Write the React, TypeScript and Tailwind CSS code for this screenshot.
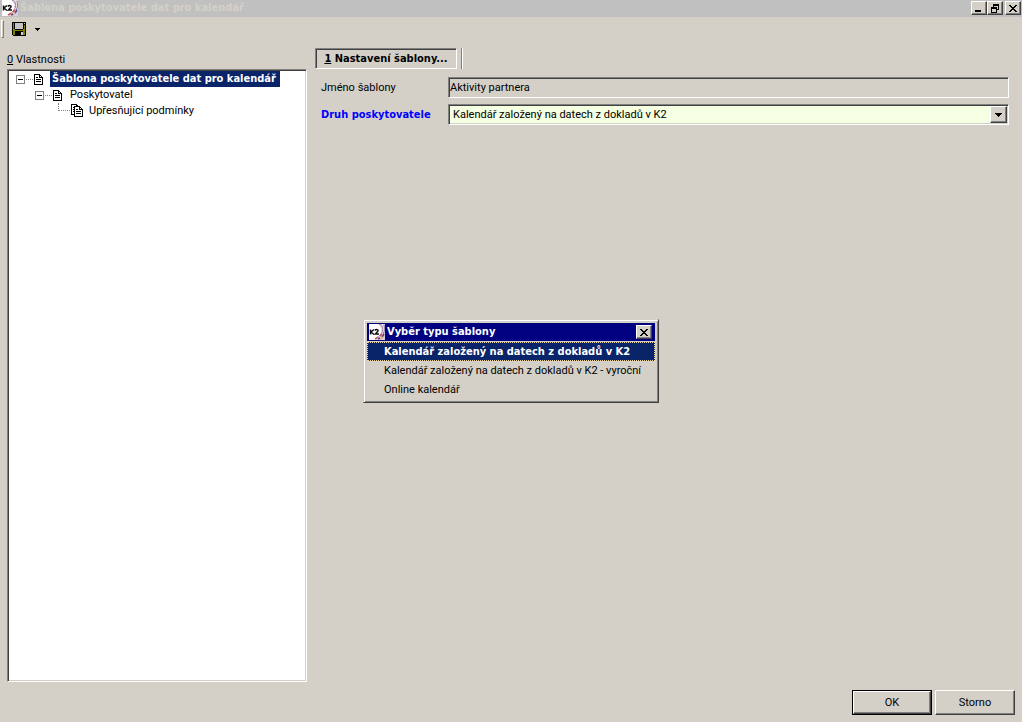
import { useState } from "react";

const TEMPLATE_TYPES = [
  "Kalendář založený na datech z dokladů v K2",
  "Kalendář založený na datech z dokladů v K2 - vyroční",
  "Online kalendář",
];

const boldFont = "font-['DejaVu_Sans_Condensed','DejaVu_Sans',sans-serif] font-bold";
const raised =
  "border border-t-white border-l-white border-r-[#404040] border-b-[#404040] bg-[#d4d0c8] shadow-[inset_-1px_-1px_0_#808080]";
const sunken =
  "border border-t-[#808080] border-l-[#808080] border-r-white border-b-white shadow-[inset_1px_1px_0_#404040,inset_-1px_-1px_0_#d4d0c8]";

const Logo = () => (
  <svg width="16" height="16" viewBox="0 0 16 16" className="shrink-0" aria-hidden="true">
    <rect width="16" height="16" fill="#fff" />
    <path d="M9 0h7v16H5l5-3 2-4V4z" fill="#d9cfdc" />
    <path d="M8 0c5 1 7 5 4 10-1 2-3 3-6 5" fill="none" stroke="#fff" strokeWidth="1" />
    <path d="M10 0c4 2 5 6 2 10-1 2-3 3-6 5" fill="none" stroke="#9a6f9c" strokeWidth="1" />
    <path d="M13 0c3 4 2 8-1 11" fill="none" stroke="#f4e3d0" strokeWidth="1" />
    <path d="M15 1c1 3 1 6-1 9" fill="none" stroke="#8d7aa8" strokeWidth="1" />
    <path d="M6 15l3-2M11 12l2-2" stroke="#dc4b3c" strokeWidth="1.500" />
    <path d="M9 15l2-1M13 13l2-3" stroke="#55408f" strokeWidth="1.500" />
    <path d="M11 15l3-2" stroke="#e9a04a" strokeWidth="1" />
    <path d="M1.500 5.500v5M5 5.500L2 8l3 2.500M6 6.500c1-1.500 3.500-1 3 .5L6.500 10H10" fill="none" stroke="#111" strokeWidth="1.500" />
  </svg>
);

const CloseGlyph = () => (
  <svg width="8" height="7" viewBox="0 0 8 7" shapeRendering="crispEdges" aria-hidden="true">
    <path d="M0 0h2v1H0zM6 0h2v1H6zM1 1h2v1H1zM5 1h2v1H5zM2 2h4v1H2zM3 3h2v1H3zM2 4h4v1H2zM1 5h2v1H1zM5 5h2v1H5zM0 6h2v1H0zM6 6h2v1H6z" />
  </svg>
);

const MinimizeGlyph = () => (
  <svg width="8" height="8" viewBox="0 0 8 8" shapeRendering="crispEdges" aria-hidden="true">
    <path d="M0 6h6v2H0z" />
  </svg>
);

const RestoreGlyph = () => (
  <svg width="8" height="9" viewBox="0 0 8 9" shapeRendering="crispEdges" aria-hidden="true">
    <path d="M2 0h6v6H6V5h1V2H3v1H2zM0 3h6v6H0zM1 5v3h4V5z" fillRule="evenodd" />
  </svg>
);

const ArrowGlyph = ({ small }: { small?: boolean }) =>
  small ? (
    <svg width="5" height="3" viewBox="0 0 5 3" shapeRendering="crispEdges" aria-hidden="true">
      <path d="M0 0h5v1H0zM1 1h3v1H1zM2 2h1v1H2z" />
    </svg>
  ) : (
    <svg width="7" height="4" viewBox="0 0 7 4" shapeRendering="crispEdges" aria-hidden="true">
      <path d="M0 0h7v1H0zM1 1h5v1H1zM2 2h3v1H2zM3 3h1v1H3z" />
    </svg>
  );

const SaveIcon = () => (
  <svg width="14" height="14" viewBox="0 0 14 14" shapeRendering="crispEdges" aria-hidden="true">
    <path d="M0 0h14v14H1l-1-1z" />
    <path d="M1 1h1v12H1zM2 8h10v1H2zM12 3h1v10h-1z" fill="#808000" />
    <path d="M3 1h8v6H3zM12 1h1v1h-1z" fill="#c6c3c6" />
    <path d="M2 9h1v4H2zM11 9h1v4h-1zM11 7h1v2h-1zM2 7h1v2H2z" fill="#808000" />
    <path d="M9 10h2v3H9z" fill="#d4d0c8" />
  </svg>
);

const PageIcon = () => (
  <svg width="9" height="11" viewBox="0 0 9 11" shapeRendering="crispEdges" aria-hidden="true">
    <path d="M0 0h6v1h1v1h1v1h1v8H0z" />
    <path d="M1 1h4v3h3v6H1zM6 2h1v1H6z" fill="#fff" />
    <path d="M2 3h2v1H2zM2 5h5v1H2zM2 7h5v1H2z" />
  </svg>
);

const PagesIcon = () => (
  <svg width="12" height="13" viewBox="0 0 12 13" shapeRendering="crispEdges" aria-hidden="true">
    <path d="M0 0h6v1h1v1h1v9H0z" />
    <path d="M1 1h4v9H1z" fill="#fff" />
    <path d="M2 3h1v1H2zM2 5h1v1H2zM2 7h1v1H2z" />
    <path d="M3 2h6v1h1v1h1v1h1v8H3z" />
    <path d="M4 3h4v3h3v6H4zM9 4h1v1H9z" fill="#fff" />
    <path d="M5 5h2v1H5zM5 7h5v1H5zM5 9h5v1H5z" />
  </svg>
);

const Expander = () => (
  <svg width="9" height="9" viewBox="0 0 9 9" shapeRendering="crispEdges" aria-hidden="true">
    <path d="M0 0h9v9H0zM1 1v7h7V1z" fill="#808080" fillRule="evenodd" />
    <path d="M2 4h5v1H2z" />
  </svg>
);

const Dots = () => <span className="mx-px w-[7px] border-t border-dotted border-[#808080]" />;

const Tree = () => {
  const [open, setOpen] = useState([true, true]);

  const toggle = (index: number) => {
    setOpen((prev) => prev.map((value, i) => (i === index ? !value : value)));
  };

  return (
    <ul id="tree" className={`w-[300px] flex-1 bg-white pt-px pl-2 ${sunken}`}>
      <li>
        <div className="flex h-4 items-center">
          <button type="button" aria-label="Šablona" onClick={() => toggle(0)}>
            <Expander />
          </button>
          <Dots />
          <PageIcon />
          <span className={`ml-[7px] h-4 bg-[#0a246a] pr-1 pl-[2px] leading-4 text-white ${boldFont}`}>
            Šablona poskytovatele dat pro kalendář
          </span>
        </div>
        {open[0] && (
          <ul className="pl-[19px]">
            <li>
              <div className="flex h-4 items-center">
                <button type="button" aria-label="Poskytovatel" onClick={() => toggle(1)}>
                  <Expander />
                </button>
                <Dots />
                <PageIcon />
                <span className="ml-[7px] px-px leading-4">Poskytovatel</span>
              </div>
              {open[1] && (
                <ul className="pl-[23px]">
                  <li className="flex h-4">
                    <span className="mr-px h-2 w-3 border-b border-l border-dotted border-[#808080]" />
                    <span className="mt-px">
                      <PagesIcon />
                    </span>
                    <span className="ml-[5px] px-px leading-4">Upřesňující podmínky</span>
                  </li>
                </ul>
              )}
            </li>
          </ul>
        )}
      </li>
    </ul>
  );
};

const App = () => {
  const [type, setType] = useState(TEMPLATE_TYPES[0]);
  const [dialogOpen, setDialogOpen] = useState(true);

  const windowButton = `flex h-[14px] w-4 items-center justify-center ${raised}`;

  return (
    <div className="flex min-h-screen flex-col bg-[#d4d0c8] font-['Roboto',sans-serif] text-[11px] leading-4 text-black">
      <header className="flex h-[17px] items-center bg-[#c0c0c0] pr-px pb-px pl-[2px]">
        <Logo />
        <h1 className={`ml-[2px] flex-1 text-[#d4d0c8] ${boldFont}`}>
          Šablona poskytovatele dat pro kalendář
        </h1>
        <button type="button" aria-label="Minimalizovat" className={windowButton}>
          <MinimizeGlyph />
        </button>
        <button type="button" aria-label="Obnovit" className={windowButton}>
          <RestoreGlyph />
        </button>
        <button type="button" aria-label="Zavřít" className={`ml-[2px] ${windowButton}`}>
          <CloseGlyph />
        </button>
      </header>

      <div className="flex h-6 items-center pl-px">
        <span className="h-[18px] w-[3px] border border-t-white border-r-[#808080] border-b-[#808080] border-l-white" />
        <button type="button" aria-label="Uložit" className="ml-2">
          <SaveIcon />
        </button>
        <button type="button" aria-label="Další možnosti" className="ml-[9px]">
          <ArrowGlyph small />
        </button>
      </div>

      <main className="flex flex-1 px-[7px]">
        <section className="flex flex-col pt-[11px]">
          <h2 className="mb-px">
            <span className="underline">0</span> Vlastnosti
          </h2>
          <Tree />
        </section>

        <section className="flex-1 pt-[7px] pr-[6px] pl-2">
          <div className="flex h-[21px] gap-1">
            <button
              type="button"
              className={`w-[142px] text-center ${boldFont} ${sunken}`}
            >
              <span className="underline">1</span> Nastavení šablony...
            </button>
            <span className="w-[2px] border-r border-l border-r-white border-l-[#808080]" />
          </div>
          <div className="mt-2 flex items-center pl-[6px]">
            <label htmlFor="name" className="w-[127px] pt-px">
              Jméno šablony
            </label>
            <input
              id="name"
              readOnly
              defaultValue="Aktivity partnera"
              className={`h-[21px] min-w-0 flex-1 bg-[#d4d0c8] px-px outline-none ${sunken}`}
            />
          </div>
          <div className="mt-[6px] flex items-center pl-[6px]">
            <label htmlFor="kind" className={`w-[127px] pt-px text-[#0000ff] ${boldFont}`}>
              Druh poskytovatele
            </label>
            <div className="relative flex h-[21px] min-w-0 flex-1">
              <select
                id="kind"
                value={type}
                onChange={(e) => setType(e.target.value)}
                className={`w-full appearance-none bg-[#f5ffe1] pl-1 outline-none ${sunken}`}
              >
                {TEMPLATE_TYPES.map((item) => (
                  <option key={item}>{item}</option>
                ))}
              </select>
              <span
                className={`pointer-events-none absolute top-[2px] right-[2px] bottom-[2px] flex w-[17px] items-center justify-center ${raised}`}
              >
                <ArrowGlyph />
              </span>
            </div>
          </div>
        </section>
      </main>

      <footer className="flex justify-end gap-[3px] px-[7px] pt-2 pb-[7px]">
        <button type="button" className="border border-black">
          <span className={`flex h-[23px] w-[78px] items-center justify-center ${raised}`}>OK</span>
        </button>
        <button type="button" className={`h-[25px] w-20 ${raised}`}>
          Storno
        </button>
      </footer>

      {dialogOpen && (
        <div className="pointer-events-none fixed inset-0 flex items-center justify-center">
          <div
            role="dialog"
            aria-label="Vyběr typu šablony"
            className="pointer-events-auto w-[296px] border border-t-[#d4d0c8] border-r-[#404040] border-b-[#404040] border-l-[#d4d0c8] bg-[#d4d0c8] p-[3px] shadow-[inset_1px_1px_0_#fff,inset_-1px_-1px_0_#808080]"
          >
            <div className="flex h-[18px] items-center bg-[#000080] pr-[3px] pl-[2px] text-white">
              <Logo />
              <h2 className={`ml-[2px] flex-1 ${boldFont}`}>Vyběr typu šablony</h2>
              <button
                type="button"
                aria-label="Zavřít"
                onClick={() => setDialogOpen(false)}
                className={`text-black ${windowButton}`}
              >
                <CloseGlyph />
              </button>
            </div>
            <ul className="mt-px">
              {TEMPLATE_TYPES.map((item) => (
                <li key={item}>
                  <button
                    type="button"
                    onClick={() => setType(item)}
                    className={
                      item === type
                        ? `block h-[19px] w-full border border-dotted border-[#f5db95] bg-[#0a246a] pl-4 text-left text-white ${boldFont}`
                        : "block h-[19px] w-full border border-transparent pl-4 text-left"
                    }
                  >
                    {item}
                  </button>
                </li>
              ))}
            </ul>
          </div>
        </div>
      )}
    </div>
  );
};

export default App;
